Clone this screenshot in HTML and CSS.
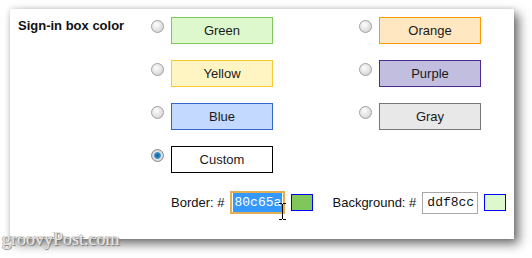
FILE: index.html
```html
<!DOCTYPE html>
<html lang="en">
<head>
  <meta charset="UTF-8" />
  <title>Sign-in box color</title>
  <link rel="stylesheet" href="styles.css">
</head>
<body>
  <div class="panel">
    <div class="label">Sign-in box color</div>
    <div class="settings">
      <div class="options">
        <div class="option"><span class="radio"></span><span class="choice green">Green</span></div>
        <div class="option"><span class="radio"></span><span class="choice orange">Orange</span></div>
        <div class="option"><span class="radio"></span><span class="choice yellow">Yellow</span></div>
        <div class="option"><span class="radio"></span><span class="choice purple">Purple</span></div>
        <div class="option"><span class="radio"></span><span class="choice blue">Blue</span></div>
        <div class="option"><span class="radio"></span><span class="choice gray">Gray</span></div>
        <div class="option"><span class="radio checked"></span><span class="choice custom">Custom</span></div>
      </div>

      <div class="custom-row">
        <span class="field-label">Border: #</span>
        <span class="hex-input focused"><span class="selected">80c65a</span></span>
        <span class="swatch" style="background:#80c65a"></span>
        <span class="field-label bg-label">Background: #</span>
        <span class="hex-input">ddf8cc</span>
        <span class="swatch" style="background:#ddf8cc"></span>
      </div>
    </div>
  </div>

  <svg class="ibeam" width="9" height="17" viewBox="0 0 9 17">
    <path d="M1 0.5h3M5 0.5h3M4.5 1v15M1 16.5h3M5 16.5h3" stroke="#000" stroke-width="1" fill="none"/>
  </svg>

  <div class="watermark">groovyPost.com</div>
</body>
</html>
```

FILE: styles.css
```css
body {
  margin: 0;
  background: #fff;
  font-family: 'Liberation Sans', Arial, sans-serif;
  font-size: 13px;
  color: #222;
  position: relative;
  height: 258px;
  overflow: hidden;
}
.panel {
  margin: 9px 0 0 10px;
  width: 504px;
  height: 230px;
  box-sizing: border-box;
  padding: 8px 0 0 8px;
  background: #fff;
  display: flex;
  box-shadow: 5px 5px 10px rgba(0,0,0,0.55), 0 0 5px rgba(0,0,0,0.15);
}
.label {
  flex: 0 0 133px;
  white-space: nowrap;
  font-weight: bold;
  line-height: 15px;
  margin-top: 1px;
  color: #111;
}
.options {
  display: grid;
  grid-template-columns: 208px auto;
  row-gap: 16px;
}
.option {
  display: flex;
  align-items: flex-start;
  gap: 7px;
}
.radio {
  width: 11px;
  height: 11px;
  margin-top: 3px;
  border-radius: 50%;
  border: 1px solid #a0a0a0;
  background: radial-gradient(circle at 40% 35%, #fdfdfd 0%, #e2e2e2 55%, #c4c4c4 100%);
}
.radio.checked {
  background: radial-gradient(circle, #0f5e94 0%, #2a86c4 30%, #5aa0cc 40%, #e4e4e4 50%, #c0c0c0 100%);
  border-color: #8a8a8a;
}
.choice {
  width: 102px;
  height: 27px;
  box-sizing: border-box;
  border: 1px solid;
  line-height: 25px;
  text-align: center;
  color: #1a1a1a;
}
.green { background: #ddf8cc; border-color: #80c65a; }
.orange { background: #ffe8c1; border-color: #ff9900; }
.yellow { background: #fff5c2; border-color: #f9c933; }
.purple { background: #c2bedf; border-color: #4e2a92; }
.blue { background: #c3d9ff; border-color: #3366cc; }
.gray { background: #e8e8e8; border-color: #777; }
.custom { background: #fff; border-color: #000; }
.custom-row {
  display: flex;
  align-items: center;
  margin-top: 18px;
  padding-left: 20px;
}
.field-label {
  color: #111;
  margin-right: 6px;
}
.bg-label {
  margin-left: 19px;
}
.hex-input {
  width: 56px;
  height: 22px;
  box-sizing: border-box;
  border: 1px solid #a8a8a8;
  font-family: 'Liberation Mono', 'Courier New', monospace;
  font-size: 13px;
  line-height: 20px;
  padding-left: 4px;
  color: #111;
}
.hex-input.focused {
  width: 55px;
  height: 23px;
  border: 2px solid #e4ae52;
  padding-left: 1px;
  line-height: 19px;
}
.selected {
  background: #3399ff;
  color: #fff;
  display: inline-block;
  padding: 0 1px;
}
.swatch {
  width: 22px;
  height: 17px;
  box-sizing: border-box;
  border: 1px solid #0000ff;
  margin-left: 6px;
}
.ibeam {
  position: absolute;
  left: 278px;
  top: 203px;
}
.watermark {
  position: absolute;
  left: 2px;
  top: 229px;
  font-family: 'Liberation Serif', Georgia, serif;
  font-size: 18px;
  color: #e6e6e6;
  text-shadow: 1px 1px 1px #777, -1px 0 0 #b5b5b5;
}
```
